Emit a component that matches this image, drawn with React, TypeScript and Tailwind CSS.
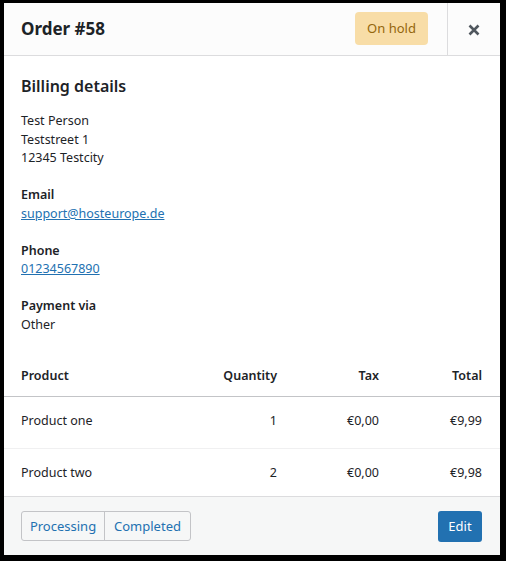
import React from "react";

function CloseIcon() {
  return (
    <svg width="12" height="12" viewBox="0 0 12 12" fill="none">
      <path d="M1.5 1.5L10.5 10.5M10.5 1.5L1.5 10.5" stroke="#50575e" strokeWidth="2.6" strokeLinecap="butt" />
    </svg>
  );
}

const rows = [
  { name: "Product one", qty: "1", tax: "€0,00", total: "€9,99" },
  { name: "Product two", qty: "2", tax: "€0,00", total: "€9,98" },
];

export default function App() {
  return (
    <div className="w-[506px] h-[561px] bg-black pl-[4px] pt-[3px] pr-[6px] pb-[6px] font-['Noto_Sans',sans-serif] text-[12.5px] leading-[18.5px] text-[#1d2327]">
      <div className="flex h-full flex-col bg-white">
        <div className="flex h-[53px] shrink-0 items-center border-b border-[#dcdcde] bg-[#fcfcfc]">
          <h1 className="pl-[17px] pt-[1px] text-[17px] font-bold">Order #58</h1>
          <span className="ml-auto mr-[19px] -mt-[2px] flex h-[33px] w-[73px] items-center justify-center rounded-[4px] bg-[#f8dda7] text-[13px] text-[#94660c]">
            On hold
          </span>
          <button className="flex h-full w-[53px] items-center justify-center border-l border-[#dcdcde] pt-[1px]">
            <CloseIcon />
          </button>
        </div>
        <div className="flex-1 overflow-hidden">
          <div className="px-[17px] pt-[19px]">
            <h2 className="text-[16px] font-semibold leading-[22px]">Billing details</h2>
            <div className="mt-[15px]">
              <div>Test Person</div>
              <div>Teststreet 1</div>
              <div>12345 Testcity</div>
            </div>
            <div className="mt-[18.5px] font-semibold">Email</div>
            <a className="text-[#2271b1] underline" href="#">support@hosteurope.de</a>
            <div className="mt-[18.5px] font-semibold">Phone</div>
            <a className="text-[#2271b1] underline" href="#">01234567890</a>
            <div className="mt-[18.5px] font-semibold">Payment via</div>
            <div>Other</div>
          </div>
          <div className="mt-[32px]">
            <div className="grid grid-cols-[156px_100px_102px_103px] border-b border-[#c3c4c7] pl-[17px] pt-[1px] pb-[10px] font-semibold">
              <div>Product</div>
              <div className="text-right">Quantity</div>
              <div className="text-right">Tax</div>
              <div className="text-right">Total</div>
            </div>
            {rows.map((r, i) => (
              <div
                key={r.name}
                className={`grid grid-cols-[156px_100px_102px_103px] pl-[17px] pt-[15px] pb-[18px] ${i === 0 ? "border-b border-[#f0f0f1]" : ""}`}
              >
                <div>{r.name}</div>
                <div className="text-right">{r.qty}</div>
                <div className="text-right">{r.tax}</div>
                <div className="text-right">{r.total}</div>
              </div>
            ))}
          </div>
        </div>
        <div className="flex h-[59px] shrink-0 items-center border-t border-[#dcdcde] bg-[#f6f7f7] pl-[17px] pr-[18px]">
          <div className="flex h-[30px] overflow-hidden rounded-[3px] border border-[#c3c4c7] bg-[#f6f7f7] text-[13px] text-[#2271b1]">
            <button className="w-[83px] border-r border-[#c3c4c7] text-center">Processing</button>
            <button className="w-[85px] text-center">Completed</button>
          </div>
          <button className="ml-auto h-[31px] w-[44px] rounded-[3px] bg-[#2271b1] text-[13px] text-white">Edit</button>
        </div>
      </div>
    </div>
  );
}
